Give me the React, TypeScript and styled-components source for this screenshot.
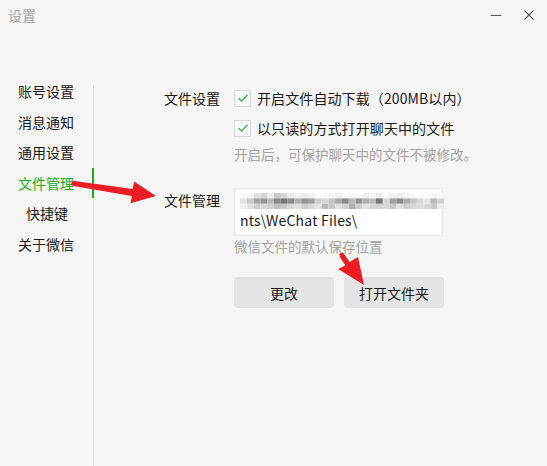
import React from "react";
import styled, { createGlobalStyle } from "styled-components";

const Global = createGlobalStyle`
  html, body { margin: 0; padding: 0; background: #f5f5f5; }
  body { font-family: "Noto Sans CJK SC", "Noto Sans", sans-serif; }
`;

const Window = styled.div`
  position: relative;
  width: 547px;
  height: 466px;
  background: #f5f5f5;
  display: flex;
  flex-direction: column;
  overflow: hidden;
  font-family: "Noto Sans CJK SC", "Noto Sans", sans-serif;
  color: #1a1a1a;
`;

const TitleBar = styled.div`
  height: 28px;
  display: flex;
  align-items: center;
  padding: 2px 0 0 8px;
  box-sizing: border-box;
`;

const Title = styled.div`
  font-size: 14px;
  color: #a6a6a6;
  flex: 1;
`;

const WinButton = styled.div`
  width: 33px;
  height: 24px;
  display: flex;
  align-items: center;
  justify-content: center;
`;

const Body = styled.div`
  flex: 1;
  display: flex;
  padding-top: 48px;
`;

const Nav = styled.div`
  width: 93px;
  display: flex;
  flex-direction: column;
`;

const NavItem = styled.div<{ $active?: boolean; $center?: boolean }>`
  position: relative;
  height: 30.6px;
  line-height: 30.6px;
  font-size: 14px;
  padding-left: ${(p) => (p.$center ? "26px" : "18px")};
  color: ${(p) => (p.$active ? "#1aad19" : "#1a1a1a")};
  &::after {
    content: "";
    display: ${(p) => (p.$active ? "block" : "none")};
    position: absolute;
    right: -1px;
    top: 0;
    width: 2px;
    height: 100%;
    background: #1aad19;
  }
`;

const Divider = styled.div`
  width: 1px;
  margin-top: 9px;
  background: #dfdfdf;
`;

const Main = styled.div`
  flex: 1;
  padding: 11px 0 0 70px;
  display: flex;
  flex-direction: column;
`;

const Section = styled.div<{ $gap?: number }>`
  display: grid;
  grid-template-columns: 70px 1fr;
  margin-top: ${(p) => p.$gap ?? 0}px;
`;

const Label = styled.div<{ $top?: number }>`
  font-size: 14px;
  line-height: 22px;
  padding-top: ${(p) => p.$top ?? 0}px;
`;

const Column = styled.div`
  display: flex;
  flex-direction: column;
`;

const CheckRow = styled.div<{ $gap?: number }>`
  display: flex;
  align-items: center;
  height: 22px;
  font-size: 14px;
  letter-spacing: 0.1px;
  margin-top: ${(p) => p.$gap ?? 0}px;
`;

const Box = styled.div`
  width: 15px;
  height: 15px;
  border: 1px solid #d9d9d9;
  background: #f9f9f9;
  margin: 0 6px 0 0;
  display: flex;
  align-items: center;
  justify-content: center;
  box-sizing: content-box;
`;

const Hint = styled.div<{ $gap?: number }>`
  font-size: 13.5px;
  line-height: 20px;
  color: #a3a3a3;
  margin-top: ${(p) => p.$gap ?? 0}px;
`;

const PathBox = styled.div`
  width: 209px;
  height: 48px;
  box-sizing: border-box;
  border: 1px solid #e6e6e6;
  background: #ffffff;
  padding: 4px 0 0 5px;
  display: flex;
  flex-direction: column;
`;

const PathText = styled.div`
  font-size: 14px;
  line-height: 22px;
  letter-spacing: 0.2px;
  color: #1a1a1a;
  margin-top: 0px;
`;

const Buttons = styled.div`
  display: flex;
  gap: 10px;
  margin-top: 21px;
`;

const Button = styled.div`
  width: 100px;
  height: 31px;
  border-radius: 3px;
  background: #e4e4e4;
  font-size: 14px;
  display: flex;
  align-items: center;
  justify-content: center;
  color: #1a1a1a;
`;

const Overlay = styled.svg`
  position: absolute;
  left: 0;
  top: 0;
  pointer-events: none;
`;

const Check = () => (
  <svg width="12" height="10" viewBox="0 0 12 10">
    <path d="M1.5 5.2 L4.6 8 L10.5 1.8" fill="none" stroke="#3bb54a" strokeWidth="1.3" />
  </svg>
);

const shades = [
  [250, 245, 225, 210, 235, 200, 215, 235, 240, 235, 240, 250, 250, 245, 240, 250, 245, 250, 240, 245, 235, 250, 240, 235, 245, 250, 250, 250, 245, 250],
  [225, 200, 165, 150, 185, 135, 120, 140, 175, 150, 160, 205, 215, 195, 170, 140, 185, 145, 175, 185, 120, 215, 160, 140, 175, 195, 215, 230, 185, 210],
  [240, 225, 205, 215, 210, 190, 200, 215, 225, 205, 215, 230, 185, 200, 225, 210, 175, 205, 225, 215, 210, 215, 200, 225, 205, 215, 220, 215, 200, 235],
];

const Pixels = () => (
  <svg width="204" height="16" viewBox="0 0 204 16">
    {shades.map((row, r) =>
      row.map((v, c) => (
        <rect
          key={`${r}-${c}`}
          x={c * 6.8}
          y={r * 5.4}
          width={6.8}
          height={5.4}
          fill={`rgb(${v},${v},${v})`}
        />
      ))
    )}
  </svg>
);

export default function App() {
  return (
    <>
      <Global />
      <Window>
        <TitleBar>
          <Title>设置</Title>
          <WinButton>
            <svg width="12" height="12" viewBox="0 0 12 12">
              <line x1="1" y1="6.5" x2="11" y2="6.5" stroke="#555" strokeWidth="1" />
            </svg>
          </WinButton>
          <WinButton style={{ marginRight: 2 }}>
            <svg width="12" height="12" viewBox="0 0 12 12">
              <path d="M1.5 1.5 L10.5 10.5 M10.5 1.5 L1.5 10.5" stroke="#555" strokeWidth="1.1" />
            </svg>
          </WinButton>
        </TitleBar>
        <Body>
          <Nav>
            <NavItem>账号设置</NavItem>
            <NavItem>消息通知</NavItem>
            <NavItem>通用设置</NavItem>
            <NavItem $active>文件管理</NavItem>
            <NavItem $center>快捷键</NavItem>
            <NavItem>关于微信</NavItem>
          </Nav>
          <Divider />
          <Main>
            <Section>
              <Label>文件设置</Label>
              <Column>
                <CheckRow>
                  <Box>
                    <Check />
                  </Box>
                  开启文件自动下载（200MB以内）
                </CheckRow>
                <CheckRow $gap={8}>
                  <Box>
                    <Check />
                  </Box>
                  以只读的方式打开聊天中的文件
                </CheckRow>
                <Hint $gap={5}>开启后，可保护聊天中的文件不被修改。</Hint>
              </Column>
            </Section>
            <Section $gap={24}>
              <Label $top={1}>文件管理</Label>
              <Column>
                <PathBox>
                  <Pixels />
                  <PathText>nts\WeChat Files\</PathText>
                </PathBox>
                <Hint $gap={0}>微信文件的默认保存位置</Hint>
                <Buttons>
                  <Button>更改</Button>
                  <Button>打开文件夹</Button>
                </Buttons>
              </Column>
            </Section>
          </Main>
        </Body>
        <Overlay width="547" height="466" viewBox="0 0 547 466">
          <polygon
            points="74.4,181 132.8,188.9 134,181.5 156,196 130.6,203.3 131.8,195.9 73.6,186"
            fill="#ec1c24"
            strokeLinejoin="round"
          />
          <circle cx="74" cy="183.5" r="2.5" fill="#ec1c24" />
          <polygon
            points="339.5,256.5 345.5,265.5 338,269 364,285 358,257 349.5,262 343.5,253"
            fill="#ec1c24"
          />
          <circle cx="341.5" cy="254.8" r="2.1" fill="#ec1c24" />
        </Overlay>
      </Window>
    </>
  );
}
